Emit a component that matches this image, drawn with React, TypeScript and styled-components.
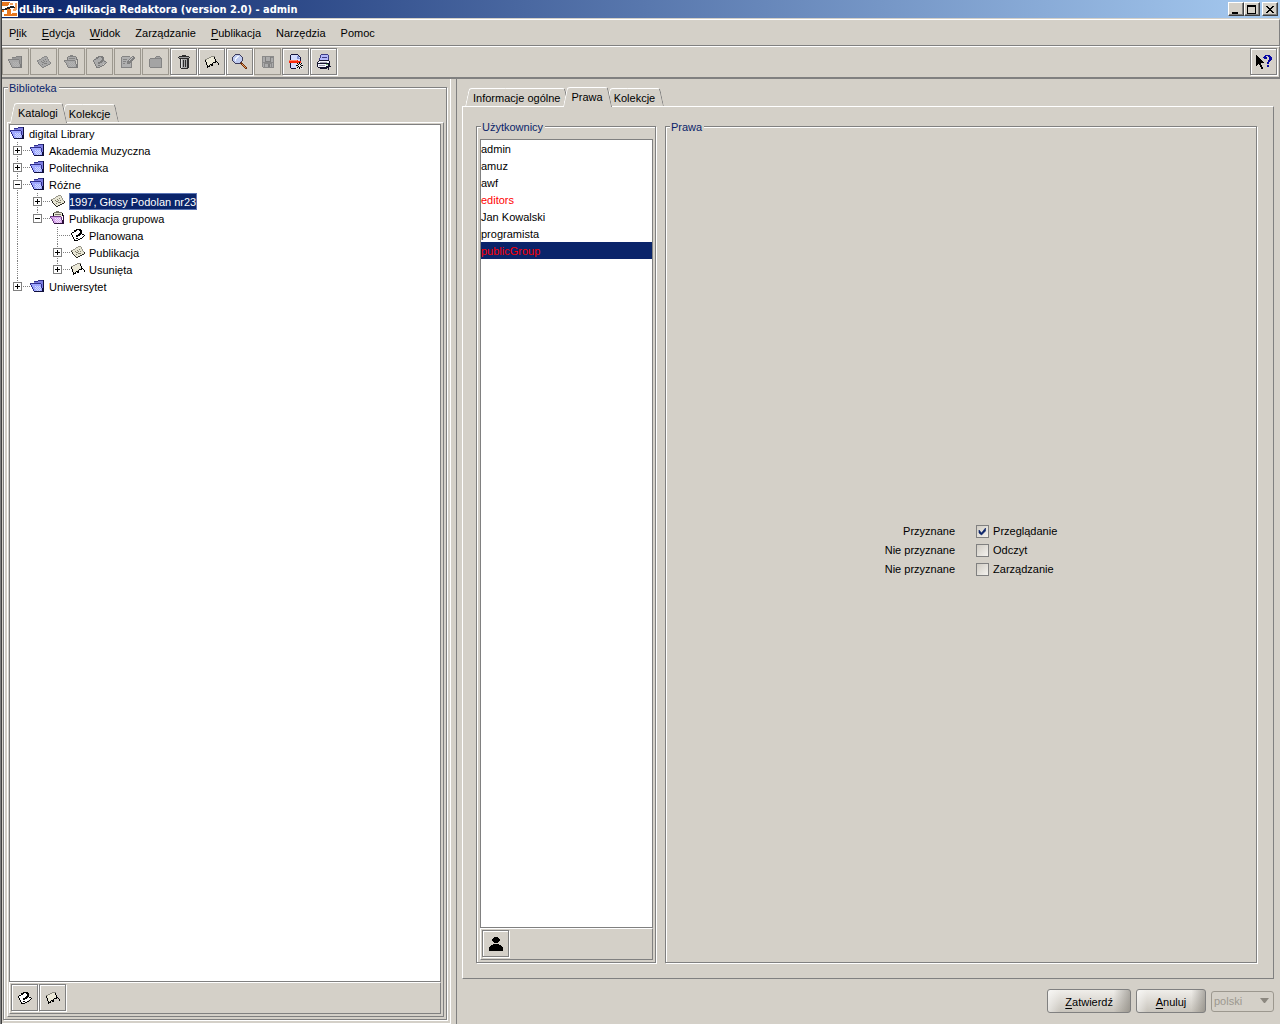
import React from "react";
import styled, { createGlobalStyle, css } from "styled-components";

const face = "#d4d0c8";
const shade = "#808080";
const lit = "#ffffff";
const navy = "#0a246a";

const GlobalStyle = createGlobalStyle`
  *, *::before, *::after { box-sizing: border-box; }
  body { margin: 0; background: ${face}; }
  body, button, input, select {
    font-family: "Liberation Sans", Arial, sans-serif;
    font-size: 11px;
    line-height: 17px;
    color: #000;
  }
  ul { list-style: none; margin: 0; padding: 0; }
  button { padding: 0; background: none; border: 0; }
  svg { display: block; flex: none; }
`;

const etched = css`
  border: 1px solid ${shade};
  box-shadow: inset 1px 1px 0 ${lit}, 1px 1px 0 ${lit};
`;

/* ---------- window frame ---------- */

const Window = styled.div`
  min-height: 100vh;
  display: flex;
  flex-direction: column;
  background: ${face};
  border-left: 1px solid ${shade};
`;

const Inner = styled.div`
  flex: 1;
  display: flex;
  flex-direction: column;
  border-left: 1px solid #404040;
`;

const TitleBar = styled.header`
  height: 18px;
  display: flex;
  align-items: center;
  padding-right: 2px;
  background: linear-gradient(to right, ${navy}, #a6caf0);
`;

const Title = styled.h1`
  flex: 1;
  margin: 0;
  padding: 2px 0 0 1px;
  font: bold 11px/16px "DejaVu Sans Condensed", "DejaVu Sans", sans-serif;
  color: #fff;
  white-space: nowrap;
`;

const CaptionButton = styled.button<{ $apart?: boolean }>`
  width: 16px;
  height: 14px;
  margin-left: ${(p) => (p.$apart ? 2 : 0)}px;
  background: ${face};
  border: 1px solid;
  border-color: ${lit} #404040 #404040 ${lit};
  box-shadow: inset -1px -1px 0 ${shade};
`;

const MenuBar = styled.nav`
  margin-top: 1px;
  height: 27px;
  border-top: 1px solid ${lit};
  border-bottom: 1px solid ${shade};
  border-right: 1px solid ${shade};
  display: flex;
  align-items: center;
  gap: 15px;
  padding: 2px 0 0 7px;
`;

const MenuItem = styled.button`
  u { text-underline-offset: 2px; }
`;

const Toolbar = styled.div`
  height: 33px;
  display: flex;
  align-items: flex-start;
  gap: 1px;
  padding: 1px 2px 0 0;
  border-top: 1px solid ${lit};
  border-right: 1px solid ${shade};
  border-bottom: 2px solid ${shade};
`;

const ToolButton = styled.button`
  width: 27px;
  height: 27px;
  display: grid;
  place-items: center;
  ${etched}
  &:disabled {
    border-color: #9c988f;
    box-shadow: none;
  }
`;

const Spacer = styled.span`
  flex: 1;
`;

const Workspace = styled.main`
  flex: 1;
  display: flex;
`;

const LibraryPane = styled.section`
  width: 448px;
  flex: none;
  display: flex;
  padding: 8px 3px 3px 1px;
  border-bottom: 1px solid ${lit};
`;

const Splitter = styled.div`
  width: 7px;
  flex: none;
  border-left: 1px solid ${lit};
  border-right: 1px solid ${shade};
`;

const DetailPane = styled.section`
  flex: 1;
  min-width: 0;
  display: flex;
  flex-direction: column;
  padding: 8px 6px 0 5px;
`;

/* ---------- titled frame ---------- */

const Frame = styled.fieldset<{ $top: number; $width?: number }>`
  position: relative;
  min-width: 0;
  margin: 0;
  padding: ${(p) => p.$top}px 2px 2px 3px;
  flex: ${(p) => (p.$width ? `0 0 ${p.$width}px` : "1")};
  display: flex;
  flex-direction: column;
  ${etched}
`;

const Legend = styled.legend`
  position: absolute;
  top: -8px;
  left: 4px;
  padding: 0 2px 0 1px;
  background: ${face};
  color: ${navy};
`;

/* ---------- tabs ---------- */

const TabStrip = styled.div`
  height: 19px;
  display: flex;
  align-items: flex-end;
  padding-left: 4px;
`;

const Tab = styled.button`
  position: relative;
  isolation: isolate;
  height: 18px;
  padding: 2px 8px 0 7px;
  white-space: nowrap;
  & + & { margin-left: -4px; }
  &::before, &::after {
    content: "";
    position: absolute;
    z-index: -1;
    top: 0;
    bottom: 0;
    background: ${face};
    border-top: 1px solid ${lit};
  }
  &::before {
    left: 1px;
    right: 50%;
    border-left: 1px solid ${lit};
    border-top-left-radius: 3px;
    transform: skewX(-12deg);
  }
  &::after {
    left: 40%;
    right: 1px;
    border-right: 1px solid ${shade};
    border-top-right-radius: 3px;
    transform: skewX(12deg);
  }
  &[aria-selected="true"] {
    z-index: 1;
    height: 20px;
    margin-bottom: -1px;
    padding-top: 0;
  }
`;

const TabPanel = styled.div<{ $roomy?: boolean }>`
  flex: 1;
  display: flex;
  flex-direction: ${(p) => (p.$roomy ? "row" : "column")};
  gap: ${(p) => (p.$roomy ? 9 : 0)}px;
  padding: ${(p) => (p.$roomy ? "19px 16px 15px 13px" : "1px 2px 2px 1px")};
  border: 1px solid;
  border-color: ${lit} ${shade} ${shade} ${lit};
`;

/* ---------- lists ---------- */

const ListBox = styled.ul`
  flex: 1;
  background: #fff;
  border: 1px solid ${shade};
`;

const ListTools = styled.div`
  display: flex;
  gap: 1px;
  height: 32px;
  padding: 1px;
  border: 1px solid;
  border-color: ${lit} ${shade} ${shade} ${lit};
`;

const TreeRow = styled.li`
  height: 17px;
  display: flex;
`;

const dots = (dir: string) =>
  `repeating-linear-gradient(${dir}, ${shade} 0 1px, transparent 1px 2px)`;

const Guide = styled.span<{ $kind: GuideKind }>`
  width: 20px;
  height: 17px;
  flex: none;
  padding: 4px 0 0 3px;
  background-repeat: no-repeat;
  background-image: ${(p) =>
    p.$kind === "none"
      ? "none"
      : p.$kind === "line"
        ? dots("to bottom")
        : `${dots("to bottom")}, ${dots("to right")}`};
  background-size: 1px ${(p) => (p.$kind === "end" ? "9px" : "100%")}, 13px 1px;
  background-position: 7px 0, 7px 8px;
`;

const Expander = styled.button`
  width: 9px;
  height: 9px;
  display: block;
  background: #fff;
  border: 1px solid ${shade};
`;

const NodeIcon = styled.span`
  width: 19px;
  flex: none;
`;

const NodeLabel = styled.span<{ $selected?: boolean }>`
  height: 17px;
  padding: 1px 1px 0 0;
  white-space: nowrap;
  ${(p) =>
    p.$selected &&
    css`
      background: ${navy};
      color: #fff;
      outline: 1px solid #5a74b4;
      outline-offset: -1px;
    `}
`;

const UserRow = styled.li<{ $group?: boolean; $selected?: boolean }>`
  height: 17px;
  padding-top: 1px;
  color: ${(p) => (p.$group ? "#f00" : "#000")};
  background: ${(p) => (p.$selected ? navy : "transparent")};
`;

/* ---------- rights ---------- */

const RightsGrid = styled.div`
  flex: 1;
  display: grid;
  grid-template-columns: auto auto;
  grid-auto-rows: 19px;
  place-content: center;
  align-items: center;
  column-gap: 21px;
  padding: 2px 0 0 19px;
`;

const Status = styled.span`
  text-align: right;
`;

const CheckLabel = styled.label`
  display: flex;
  align-items: center;
  gap: 4px;
`;

const Stack = styled.span`
  display: grid;
  align-items: center;
  & > * { grid-area: 1 / 1; }
  & > svg { pointer-events: none; justify-self: end; }
`;

const CheckBox = styled.input`
  appearance: none;
  width: 13px;
  height: 13px;
  margin: 0;
  border: 1px solid ${shade};
  background: linear-gradient(135deg, #d0ccc4, #f4f2ee);
  & + svg { visibility: hidden; }
  &:checked + svg { visibility: visible; }
`;

/* ---------- bottom bar ---------- */

const Actions = styled.div`
  display: flex;
  justify-content: flex-end;
  align-items: center;
  gap: 5px;
  padding: 10px 0 11px;
`;

const ActionButton = styled.button`
  height: 24px;
  min-width: 70px;
  padding: 2px 17px 0;
  border: 1px solid ${shade};
  border-radius: 3px;
  background:
    linear-gradient(to right, rgba(255, 255, 255, 0.5), transparent 15%, transparent 80%, rgba(110, 106, 98, 0.5)),
    linear-gradient(to bottom, #f0eeea, #c8c4bc);
  u { text-underline-offset: 2px; }
`;

const Language = styled.select`
  appearance: none;
  width: 63px;
  height: 21px;
  padding: 0 2px;
  border: 1px solid #9c988f;
  border-radius: 3px;
  background: ${face};
  color: #9c988f;
  opacity: 1;
`;

/* ---------- icons ---------- */

type IconProps = { dim?: boolean };

const Icon = ({ children, size = 16 }: { children: React.ReactNode; size?: number }) => (
  <svg width={size} height={size} viewBox={`0 0 ${size} ${size}`} shapeRendering="crispEdges" aria-hidden="true">
    {children}
  </svg>
);

const ink = (dim?: boolean) => (dim ? "#7c7c7c" : "#000");

const dither = "M5 8h1v1H5zM7 8h1v1H7zM9 8h1v1H9zM6 9h1v1H6zM8 9h1v1H8zM10 9h1v1h-1zM5 10h1v1H5zM7 10h1v1H7zM9 10h1v1H9zM6 11h1v1H6zM8 11h1v1H8zM10 11h1v1h-1zM7 12h1v1H7zM9 12h1v1H9z";

const FolderIcon = ({ dim }: IconProps) => (
  <Icon>
    <path d="M4 3h4V2h5v10H4z" fill={dim ? "#989898" : "#7c7ce0"} />
    <path d="M0 5h11v2h1v3h1v4H4v-2H3v-2H2V8H1V6H0z" fill={dim ? "#a8a8a8" : "#a0a8ff"} />
    <path d={dither} fill={dim ? "#b4b4b4" : "#d0dcff"} />
    <path d="M4 3h4v1H4zM8 2h5v1H8zM0 5h11v1H0zM0 6h1v1H0zM1 7h1v2H1zM2 9h1v2H2zM3 11h1v2H3zM11 6h1v4h-1z" fill={dim ? "#848484" : "#30308c"} />
    <path d="M13 2h1v12h-1zM4 13h10v1H4zM12 10h1v3h-1z" fill={dim ? "#7c7c7c" : "#10103c"} />
  </Icon>
);

const PageIcon = ({ dim }: IconProps) => (
  <Icon>
    <path d="M1 7l3-1 2-2 3-1 1-1 1 2 2 2 2 3-2 1-3 2-3 1-1 1-2-3-2-2z" fill={dim ? "#a8a8a8" : "#e8e6d4"} />
    <path d="M1 6h2v1H1zM3 5h2v1H3zM5 4h1v1H5zM6 3h2v1H6zM8 2h3v1H8zM11 3h1v2h-1zM12 5h1v2h-1zM13 7h1v1h-1z" fill={dim ? "#8c8c8c" : "#98968a"} />
    <path d="M1 7h1v1H1zM2 8h1v2H2zM3 10h1v1H3zM4 11h1v1H4zM5 12h1v1H5zM6 13h2v1H6zM8 12h2v1H8zM10 11h2v1h-2zM12 10h2v1h-2zM14 8h1v2h-1z" fill={dim ? "#848484" : "#2c2a24"} />
    <path d="M5 7h1v1H5zM7 6h1v1H7zM9 5h1v1H9zM6 8h2v1H6zM8 7h1v1H8zM10 7h1v1h-1zM6 10h1v1H6zM8 9h2v1H8zM10 9h1v1h-1z" fill={dim ? "#808080" : "#807e6c"} />
  </Icon>
);

const GroupIcon = ({ dim }: IconProps) => (
  <Icon>
    <path d="M4 2l4-1 1 1h3v5H4z" fill={dim ? "#acacac" : "#e8e6d4"} />
    <path d="M4 2h2V1h3v1h3v1H4zM5 4h6v1H5z" fill={dim ? "#848484" : "#77756a"} />
    <path d="M3 3h1v3H3zM12 3h1v3h-1z" fill={ink(dim)} />
    <path d="M0 6h11v2h1v2h1v4H4v-2H3v-2H2V8H1z" fill={dim ? "#a8a8a8" : "#d8a8ec"} />
    <path d={dither} fill={dim ? "#b4b4b4" : "#f4e0ff"} />
    <path d="M0 6h11v1H0zM0 7h1v1H0zM1 8h1v1H1zM2 9h1v2H2zM3 11h1v2H3zM11 7h1v3h-1z" fill={dim ? "#848484" : "#6c3c84"} />
    <path d="M4 13h10v1H4zM13 5h1v9h-1zM12 10h1v3h-1z" fill={dim ? "#7c7c7c" : "#2c1038"} />
  </Icon>
);

const PlannedIcon = ({ dim }: IconProps) => (
  <Icon>
    <path d="M1 6l4-3 5-1 2 4 2 2-2 2-3 2-3 2-2-2-2-3z" fill={dim ? "#acacac" : "#fff"} />
    <path d="M1 6h1v2H1zM2 8h1v2H2zM3 10h1v2H3zM4 12h1v2H4zM5 13h3v1H5zM8 12h2v1H8zM10 11h2v1h-2zM12 10h1v1h-1zM13 9h1v1h-1zM14 8h1v1h-1zM12 7h2v1h-2zM2 5h2v1H2z" fill={ink(dim)} />
    <path d="M4 3h2V2h5v1h1v4h-1v1h-1v1H8v1H6V8h2V7h1V6h1V4H9V3H7v1H6v1H4zM6 11h2v1H6z" fill={ink(dim)} />
  </Icon>
);

const RemovedIcon = () => (
  <Icon>
    <path d="M1 6h2V5h2V4h2V3h3v2h1v4h-2v1H8v1H6v1H5v1H3v-3H2V8H1z" fill="#ece9d8" />
    <path d="M1 5h2v1H1zM3 4h2v1H3zM5 3h2v1H5zM7 2h4v1H7z" fill="#8c8a80" />
    <path d="M1 6h1v2H1zM2 8h1v3H2zM3 11h1v3H3zM4 12h2v1H4zM5 11h1v1H5zM6 10h1v1H6zM7 10h1v2H7zM8 9h1v3H8zM9 8h2v1H9zM10 3h1v2h-1zM11 5h1v4h-1zM12 7h1v1h-1zM13 8h1v1h-1zM14 9h1v2h-1z" fill="#000" />
  </Icon>
);

const EditIcon = () => (
  <Icon>
    <path d="M2 3h9v10H2z" fill="#b0b0b0" />
    <path d="M2 2h8v1H2zM1 3h1v11H1zM2 13h10v1H2zM11 8h1v5h-1zM3 5h4v1H3zM3 7h3v1H3zM3 9h2v1H3z" fill="#848484" />
    <path d="M12 2h2v1h1v2h-1v1h-1v1h-1v1h-1v1h-1v1H7V7h1V6h1V5h1V4h1V3h1z" fill="#808080" />
    <path d="M12 3h1v1h-1zM11 4h1v1h-1zM10 5h1v1h-1zM9 6h1v1H9z" fill="#c4c4c4" />
  </Icon>
);

const PlainFolderIcon = () => (
  <Icon>
    <path d="M2 4h12v9H2zM8 3h5v1H8z" fill="#a4a4a4" />
    <path d="M8 2h4v1H8zM2 4h5V3h1v2H2zM12 3h1v1h1v10H3v-1h10V5h-5V4h4zM1 5h1v8H1zM2 13h11v1H2z" fill="#848484" />
  </Icon>
);

const TrashIcon = () => (
  <Icon>
    <path d="M4 4h9v10H4z" fill="#a8a8a8" />
    <path d="M6 1h4v1h3v1H3V2h3zM3 4h10v1H3zM4 5h1v9H4zM7 6h1v7H7zM9 6h1v7H9zM11 5h2v9h-1v1H5v-1h6z" fill="#2c2c2c" />
    <path d="M3 3h10v1H3z" fill="#9c9c9c" />
    <path d="M5 5h1v9H5z" fill="#dcdcdc" />
    <path d="M2 3h1v1H2zM13 3h1v1h-1z" fill="#2c2c2c" />
  </Icon>
);

const SearchIcon = () => (
  <Icon>
    <path d="M3 1h5v1h1v1h1v4H9v1H8v1H3V8H2V7H1V3h1V2h1z" fill="#c0ccf0" />
    <path d="M3 4h1V3h1V2h2v1H6v1H5v1H4v2H3z" fill="#f4f8ff" />
    <path d="M3 0h5v1H3zM2 1h1v1H2zM8 1h1v1H8zM1 2h1v1H1zM9 2h1v1H9zM0 3h1v4H0zM10 3h1v4h-1zM1 7h1v1H1zM9 7h1v1H9zM2 8h1v1H2zM8 8h1v1H8zM3 9h5v1H3z" fill="#3c3c5c" />
    <path d="M9 8h1v1h1v1h1v1h1v1h1v1h1v2h-2v-1h-1v-1h-1v-1h-1v-1H9v-1H8V9h1z" fill="#6c3414" />
    <path d="M10 10h1v1h1v1h1v1h1v1h-1v-1h-1v-1h-1v-1h-1z" fill="#f09c54" />
  </Icon>
);

const SaveIcon = () => (
  <Icon>
    <path d="M2 2h11l1 1v11H3l-1-1z" fill="#8a8a8a" />
    <path d="M3 3h2v5H3zM11 4h2v4h-2zM3 9h1v4H3zM12 9h1v4h-1zM5 3h6v4H5zM5 10h6v3H5z" fill="#acacac" />
    <path d="M5 3h1v4H5zM10 3h1v4h-1zM5 7h6v1H5zM8 10h2v3H8z" fill="#808080" />
  </Icon>
);

const DiscardIcon = () => (
  <Icon>
    <path d="M3 1h7l3 3v10H3z" fill="#d4dcff" />
    <path d="M3 0h7v1H3zM2 1h1v13H2zM3 14h5v1H3zM10 1h1v1h-1zM11 2h1v1h-1zM12 3h1v6h-1z" fill="#14143c" />
    <path d="M10 2h1v2h1v1H9V2z" fill="#8494d4" />
    <path d="M1 6h9v1h3v3H9V9H1z" fill="#f82c10" />
    <path d="M1 6h8v1H1z" fill="#ff8468" />
    <path d="M8 9h7v6H8z" fill="#e4e4e4" />
    <path d="M11 8h1v2h-1zM11 13h1v2h-1zM8 11h2v1H8zM13 11h2v1h-2zM9 9h1v1H9zM10 10h1v1h-1zM12 10h1v1h-1zM13 9h1v1h-1zM10 12h1v1h-1zM12 12h1v1h-1zM9 13h1v1H9zM13 13h1v1h-1z" fill="#000" />
    <path d="M11 11h1v1h-1z" fill="#fff" />
  </Icon>
);

const PrinterIcon = () => (
  <Icon>
    <path d="M5 1h7v5H4V4h1z" fill="#b4b8fc" />
    <path d="M5 0h7v1H5zM4 1h1v3H4zM3 4h1v2H3zM12 1h1v5h-1zM6 3h5v1H6z" fill="#3c3c84" />
    <path d="M2 7h11v6H2z" fill="#f4f4fc" />
    <path d="M3 6h10v1H3zM2 7h1v1H2zM1 8h1v5H1zM13 7h1v5h-1zM2 9h11v1H2zM2 13h10v1H2zM4 14h7v1H4zM12 10h1v6h-1zM10 12h5v1h-5z" fill="#14142c" />
    <path d="M3 11h6v1H3zM4 8h7v1H4z" fill="#9c9cac" />
    <path d="M10 10h2v1h-2z" fill="#68b868" />
  </Icon>
);

const HelpIcon = () => (
  <Icon>
    <path d="M0 1h1v1h1v1h1v1h1v1h1v1h1v1h1v1h1v1H5v2h1v2h1v2H5v-2H4v-2H3v-1H2v1H1v1H0z" fill="#000" />
    <path d="M7 3h1V2h1V1h5v1h1v1h1v3h-1v1h-1v1h-1v2h-2V8h1V6h1V3h-1V2h-2v1h1v2H8V4H7zM11 11h2v2h-2z" fill="#0808a4" />
  </Icon>
);

const UserIcon = () => (
  <Icon>
    <path d="M5 2h1V1h4v1h1v1h1v2h-1v1h-1v1H6V6H5V5H4V3h1zM5 8h6v1h2v1h1v1h1v4H1v-4h1v-1h1V9h2z" fill="#000" />
  </Icon>
);

const LogoIcon = () => (
  <Icon>
    <path d="M0 0h16v16H0z" fill="#fff" />
    <path d="M0 1h8v1H7v2H6v1H0zM5 8h4v5h1v-1h5v3H2v-2h3zM0 9h2v2H0z" fill="#e87820" />
    <path d="M0 8h3V7h2V6h3v2H5v1H0zM8 5h4v1h1v1H8z" fill="#202020" />
    <path d="M13 2h2v7h-1v1h-3V8h1V7h1zM8 2h3v2H8z" fill="#f0a060" />
  </Icon>
);

const CheckMark = () => (
  <svg width="13" height="13" viewBox="0 0 13 13" aria-hidden="true">
    <path d="M3 5l2.500 3L9.500 3v3L5.500 10 3 8z" fill={navy} stroke={navy} strokeWidth="0.600" />
  </svg>
);

const Arrow = () => (
  <svg width="14" height="6" viewBox="0 0 14 6" aria-hidden="true">
    <path d="M0 0h9L5 5H4z" fill="#8c8880" />
  </svg>
);

/* ---------- data ---------- */

type GuideKind = "none" | "line" | "tee" | "end";
type TreeNode = {
  label: string;
  icon: React.ReactNode;
  guides: GuideKind[];
  toggle?: "+" | "-";
  selected?: boolean;
};

const tree: TreeNode[] = [
  { label: "digital Library", icon: <FolderIcon />, guides: [] },
  { label: "Akademia Muzyczna", icon: <FolderIcon />, guides: ["tee"], toggle: "+" },
  { label: "Politechnika", icon: <FolderIcon />, guides: ["tee"], toggle: "+" },
  { label: "Różne", icon: <FolderIcon />, guides: ["tee"], toggle: "-" },
  { label: "1997, Głosy Podolan nr23", icon: <PageIcon />, guides: ["line", "tee"], toggle: "+", selected: true },
  { label: "Publikacja grupowa", icon: <GroupIcon />, guides: ["line", "end"], toggle: "-" },
  { label: "Planowana", icon: <PlannedIcon />, guides: ["line", "none", "tee"] },
  { label: "Publikacja", icon: <PageIcon />, guides: ["line", "none", "tee"], toggle: "+" },
  { label: "Usunięta", icon: <RemovedIcon />, guides: ["line", "none", "end"], toggle: "+" },
  { label: "Uniwersytet", icon: <FolderIcon />, guides: ["end"], toggle: "+" },
];

const users = [
  { name: "admin" },
  { name: "amuz" },
  { name: "awf" },
  { name: "editors", group: true },
  { name: "Jan Kowalski" },
  { name: "programista" },
  { name: "publicGroup", group: true, selected: true },
];

const menus: [string, string, string][] = [
  ["P", "l", "ik"],
  ["", "E", "dycja"],
  ["", "W", "idok"],
  ["Zarządzanie", "", ""],
  ["", "P", "ublikacja"],
  ["Narzędzia", "", ""],
  ["Pomoc", "", ""],
];

const tools: { name: string; icon: React.ReactNode; off?: boolean }[] = [
  { name: "Nowy katalog", icon: <FolderIcon dim />, off: true },
  { name: "Nowa publikacja", icon: <PageIcon dim />, off: true },
  { name: "Publikacja grupowa", icon: <GroupIcon dim />, off: true },
  { name: "Publikacja planowana", icon: <PlannedIcon dim />, off: true },
  { name: "Edycja", icon: <EditIcon />, off: true },
  { name: "Folder", icon: <PlainFolderIcon />, off: true },
  { name: "Kosz", icon: <TrashIcon /> },
  { name: "Usunięta", icon: <RemovedIcon /> },
  { name: "Szukaj", icon: <SearchIcon /> },
  { name: "Zapisz", icon: <SaveIcon />, off: true },
  { name: "Odrzuć", icon: <DiscardIcon /> },
  { name: "Drukuj", icon: <PrinterIcon /> },
];

const rights = [
  { status: "Przyznane", name: "Przeglądanie", on: true },
  { status: "Nie przyznane", name: "Odczyt", on: false },
  { status: "Nie przyznane", name: "Zarządzanie", on: false },
];

const Toggle = ({ sign }: { sign: "+" | "-" }) => (
  <Expander aria-label={sign === "+" ? "Rozwiń" : "Zwiń"}>
    <Icon size={7}>
      <path d={sign === "+" ? "M1 3h5v1H1zM3 1h1v5H3z" : "M1 3h5v1H1z"} />
    </Icon>
  </Expander>
);

export default function App() {
  return (
    <Window>
      <GlobalStyle />
      <Inner>
        <TitleBar>
          <LogoIcon />
          <Title>dLibra - Aplikacja Redaktora (version 2.0) - admin</Title>
          <CaptionButton aria-label="Minimalizuj">
            <svg width="13" height="11" shapeRendering="crispEdges"><path d="M3 8h6v2H3z" /></svg>
          </CaptionButton>
          <CaptionButton aria-label="Maksymalizuj">
            <svg width="13" height="11" shapeRendering="crispEdges"><path d="M2 1h9v9H2zM3 3v6h7V3z" fillRule="evenodd" /></svg>
          </CaptionButton>
          <CaptionButton aria-label="Zamknij" $apart>
            <svg width="13" height="11" shapeRendering="crispEdges">
              <path d="M3 2h2v1h1v1h2V3h1V2h2v1h-1v1H9v1H8v1h1v1h1v1h1v1H9V8H8V7H6v1H5v1H3V8h1V7h1V6h1V5H5V4H4V3H3z" />
            </svg>
          </CaptionButton>
        </TitleBar>
        <MenuBar>
          {menus.map(([before, key, after]) => (
            <MenuItem key={before + key + after}>
              {before}
              {key && <u>{key}</u>}
              {after}
            </MenuItem>
          ))}
        </MenuBar>
        <Toolbar>
          {tools.map((t) => (
            <ToolButton key={t.name} aria-label={t.name} disabled={t.off}>
              {t.icon}
            </ToolButton>
          ))}
          <Spacer />
          <ToolButton aria-label="Pomoc kontekstowa">
            <HelpIcon />
          </ToolButton>
        </Toolbar>
        <Workspace>
          <LibraryPane>
            <Frame $top={15}>
              <Legend>Biblioteka</Legend>
              <TabStrip role="tablist">
                <Tab role="tab" aria-selected="true">Katalogi</Tab>
                <Tab role="tab" aria-selected="false">Kolekcje</Tab>
              </TabStrip>
              <TabPanel>
                <ListBox>
                  {tree.map((node) => (
                    <TreeRow key={node.label}>
                      {node.guides.map((kind, i) => (
                        <Guide key={i} $kind={kind}>
                          {node.toggle && i === node.guides.length - 1 && <Toggle sign={node.toggle} />}
                        </Guide>
                      ))}
                      <NodeIcon>{node.icon}</NodeIcon>
                      <NodeLabel $selected={node.selected}>{node.label}</NodeLabel>
                    </TreeRow>
                  ))}
                </ListBox>
                <ListTools>
                  <ToolButton aria-label="Pokaż planowane"><PlannedIcon /></ToolButton>
                  <ToolButton aria-label="Pokaż usunięte"><RemovedIcon /></ToolButton>
                </ListTools>
              </TabPanel>
            </Frame>
          </LibraryPane>
          <Splitter />
          <DetailPane>
            <TabStrip role="tablist">
              <Tab role="tab" aria-selected="false">Informacje ogólne</Tab>
              <Tab role="tab" aria-selected="true">Prawa</Tab>
              <Tab role="tab" aria-selected="false">Kolekcje</Tab>
            </TabStrip>
            <TabPanel $roomy>
              <Frame $top={12} $width={180}>
                <Legend>Użytkownicy</Legend>
                <ListBox>
                  {users.map((u) => (
                    <UserRow key={u.name} $group={u.group} $selected={u.selected}>
                      {u.name}
                    </UserRow>
                  ))}
                </ListBox>
                <ListTools>
                  <ToolButton aria-label="Użytkownik"><UserIcon /></ToolButton>
                </ListTools>
              </Frame>
              <Frame $top={12}>
                <Legend>Prawa</Legend>
                <RightsGrid>
                  {rights.map((r) => (
                    <React.Fragment key={r.name}>
                      <Status>{r.status}</Status>
                      <CheckLabel>
                        <Stack>
                          <CheckBox type="checkbox" defaultChecked={r.on} />
                          <CheckMark />
                        </Stack>
                        {r.name}
                      </CheckLabel>
                    </React.Fragment>
                  ))}
                </RightsGrid>
              </Frame>
            </TabPanel>
            <Actions>
              <ActionButton><u>Z</u>atwierdź</ActionButton>
              <ActionButton><u>A</u>nuluj</ActionButton>
              <Stack>
                <Language aria-label="Język" disabled defaultValue="polski">
                  <option>polski</option>
                </Language>
                <Arrow />
              </Stack>
            </Actions>
          </DetailPane>
        </Workspace>
      </Inner>
    </Window>
  );
}
